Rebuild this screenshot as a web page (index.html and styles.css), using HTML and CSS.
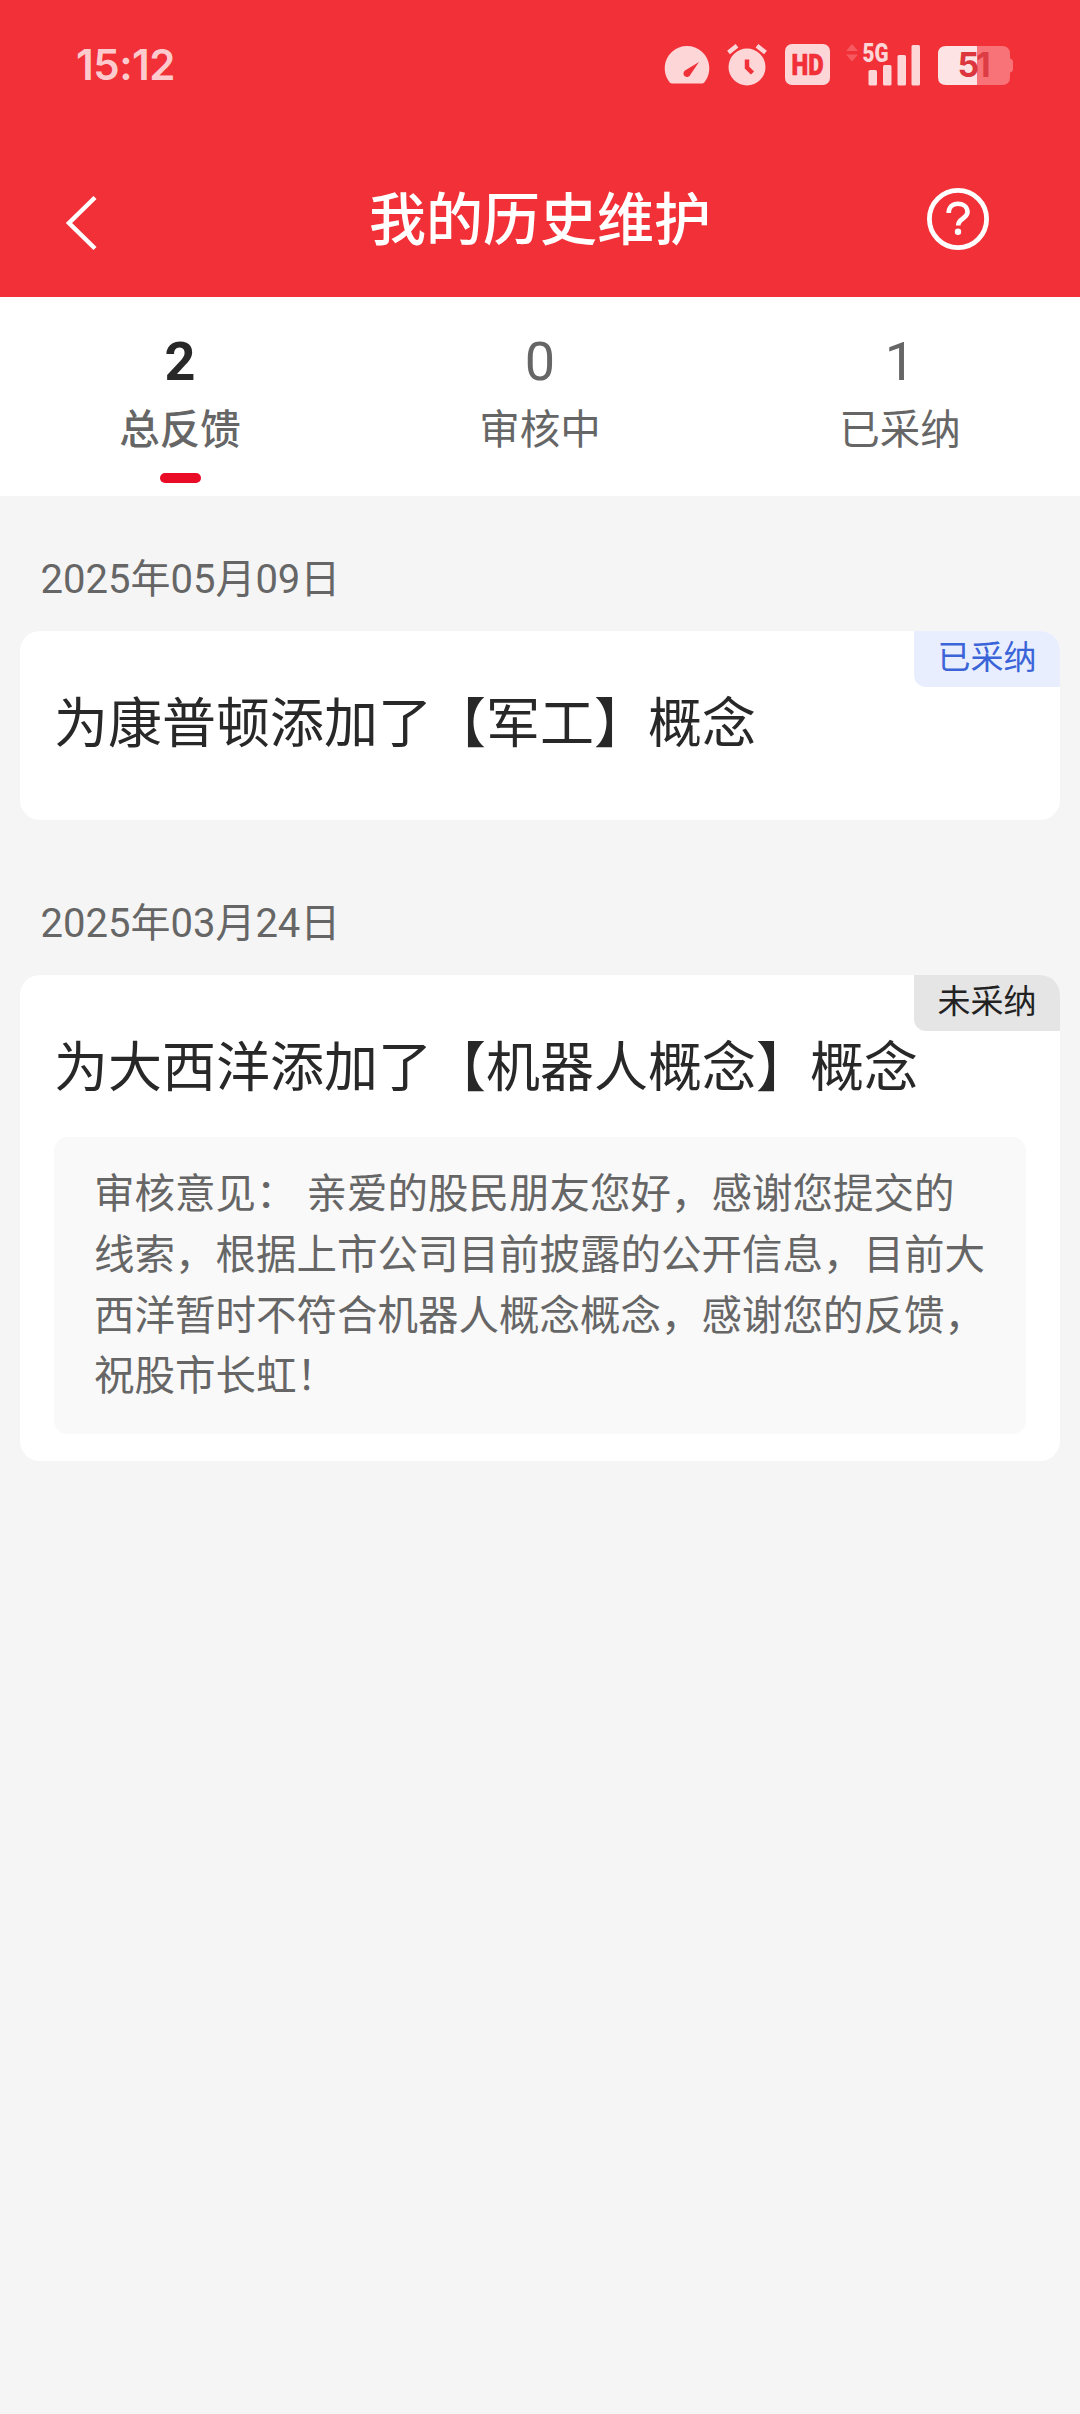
FILE: index.html
```html
<!DOCTYPE html>
<html lang="zh-CN">
<head>
    <meta charset="UTF-8">
    <meta name="viewport" content="width=device-width, initial-scale=1.0">
    <title>我的历史维护</title>
    <link rel="stylesheet" href="styles.css">
</head>
<body>
    <div class="top">
        <div class="statusBar">
            <p class="time">15:12</p>
            <div class="statusIcons">
                <svg class="gauge" width="46" height="42" viewBox="0 0 46 42">
                    <path fill="#fdd6d8" d="M8 39.500Q6 39.500 5 37.500A22.300 22.300 0 1 1 41 37.500Q40 39.500 38 39.500Z"/>
                    <path fill="#f13038" d="M35 18L26.500 30.500A3.600 3.600 0 1 1 21 26.500Z"/>
                </svg>
                <svg class="alarm" width="42" height="42" viewBox="0 0 42 42">
                    <circle cx="21" cy="23" r="18.500" fill="#fdd6d8"/>
                    <path d="M2.500 8.500L11 1.800M39.500 8.500L31 1.800" stroke="#fdd6d8" stroke-width="4.500" fill="none"/>
                    <path d="M21 15.500V23.500L26.500 29" stroke="#f13038" stroke-width="4.500" fill="none"/>
                </svg>
                <div class="hd"><span>HD</span></div>
                <svg class="signal" width="76" height="42" viewBox="0 0 76 42">
                    <path fill="#f65a60" d="M0 7L6 0L12 7ZM0 10.500H12L6 17.500Z"/>
                    <text x="16.500" y="18" textLength="26" lengthAdjust="spacingAndGlyphs" class="net">5G</text>
                    <g fill="#fdd6d8">
                        <rect x="22.500" y="26" width="8.500" height="15.500" rx="1.500"/>
                        <rect x="37" y="21" width="8.500" height="20.500" rx="1.500"/>
                        <rect x="51.500" y="11" width="8.500" height="30.500" rx="1.500"/>
                        <rect x="65.500" y="1" width="8.500" height="40.500" rx="1.500"/>
                    </g>
                </svg>
                <svg class="battery" width="76" height="42" viewBox="0 0 76 42">
                    <path fill="#f87378" d="M39 2H64Q72 2 72 10V14.500Q75 15.500 75 18V25Q75 27.500 72 28.500V33Q72 41 64 41H39Z"/>
                    <path fill="#fee3e4" d="M39 2H8Q0 2 0 10V33Q0 41 8 41H39Z"/>
                    <text x="19.500" y="33.300" class="level">5<tspan x="38" fill="#dd3c44">1</tspan></text>
                </svg>
            </div>
        </div>
        <div class="header">
            <svg class="back" width="34" height="56" viewBox="0 0 34 56">
                <path d="M31 2.500L5 28L31 53.500" stroke="#fff" stroke-width="4.500" fill="none"/>
            </svg>
            <h1>我的历史维护</h1>
            <svg class="help" width="64" height="64" viewBox="0 0 64 64">
                <circle cx="32" cy="32" r="28.600" stroke="#fff" stroke-width="4.800" fill="none"/>
                <path d="M22.700 26C22.700 20 26.500 16.700 32 16.700C37.800 16.700 41.500 20.300 41.500 25C41.500 32 32.200 31 32.200 38.500" stroke="#fff" stroke-width="4.600" fill="none"/>
                <circle cx="32" cy="44.700" r="3.200" fill="#fff"/>
            </svg>
        </div>
    </div>

    <div class="tabs">
        <div class="tab active">
            <p class="num">2</p>
            <p class="label">总反馈</p>
        </div>
        <div class="tab">
            <p class="num">0</p>
            <p class="label">审核中</p>
        </div>
        <div class="tab">
            <p class="num">1</p>
            <p class="label">已采纳</p>
        </div>
    </div>

    <div class="list">
        <p class="date">2025年05月09日</p>
        <div class="card">
            <span class="badge badgeOk">已采纳</span>
            <h2>为康普顿添加了【军工】概念</h2>
        </div>

        <p class="date">2025年03月24日</p>
        <div class="card">
            <span class="badge badgeNo">未采纳</span>
            <h2>为大西洋添加了【机器人概念】概念</h2>
            <p class="opinion">审核意见： 亲爱的股民朋友您好，感谢您提交的<br>线索，根据上市公司目前披露的公开信息，目前大<br>西洋暂时不符合机器人概念概念，感谢您的反馈，<br>祝股市长虹！</p>
        </div>
    </div>
</body>
</html>
```
FILE: styles.css
```css
*{
    padding: 0px;
    margin: 0px;
    box-sizing: border-box;
}
body{
    width: 100%;
    min-height: 2414px;
    background-color: #f5f5f5;
    font-family: Roboto, "Noto Sans CJK SC", sans-serif;
    color: #666;
}
svg{
    display: block;
    overflow: visible;
}
.top{
    height: 297px;
    background-color: #f13038;
    color: white;
}
/* status bar */
.statusBar{
    height: 129px;
    padding: 0px 66px 0px 76px;
    display: flex;
    justify-content: space-between;
    align-items: center;
}
.time{
    font-family: Inter, sans-serif;
    font-size: 42px;
    font-weight: 600;
    letter-spacing: -0.5px;
    color: #fdcbce;
}
.statusIcons{
    display: flex;
    align-items: center;
}
.alarm{
    margin-left: 16px;
}
.hd{
    width: 45px;
    height: 41px;
    margin: 0px 16px 0px 17px;
    border-radius: 7px;
    background-color: #fdd6d8;
    color: #f13038;
    font-size: 29px;
    font-weight: 900;
    line-height: 42px;
    display: flex;
    justify-content: center;
    -webkit-text-stroke: 0.6px #f13038;
}
.hd span{
    transform: scaleX(.82);
}
.net{
    font-size: 25px;
    font-weight: 900;
    fill: #fdd6d8;
}
.battery{
    margin-left: 16px;
}
.level{
    font-family: Inter, sans-serif;
    font-size: 34px;
    font-weight: 700;
    fill: #dc363e;
}
/* title bar */
.header{
    height: 168px;
    padding: 12px 90px 0px 64px;
    display: grid;
    grid-template-columns: 64px 1fr 64px;
    align-items: center;
}
.header h1{
    /* side paddings differ by 26px, keeps the title on the screen centre */
    padding: 3px 0px 0px 26px;
    font-size: 57px;
    font-weight: 500;
    line-height: 80px;
    text-align: center;
}
.back{
    margin-top: 8px;
}
/* tabs */
.tabs{
    height: 199px;
    background-color: white;
    display: flex;
}
.tab{
    flex: 1;
    display: flex;
    flex-direction: column;
    align-items: center;
    padding-top: 33px;
}
.num{
    font-size: 54px;
    line-height: 64px;
}
.label{
    font-size: 40.5px;
    line-height: 60px;
    margin-top: 6px;
}
.active .num{
    font-weight: 700;
    color: #282828;
}
.active .label{
    font-weight: 500;
}
.active::after{
    content: "";
    width: 41px;
    height: 10px;
    margin: 13px 0px 0px 1px;
    border-radius: 5px;
    background-color: #ea0c27;
}
/* feedback list */
.list{
    padding: 0px 20px;
}
.date{
    height: 135px;
    padding: 54px 20px 0px 20.5px;
    font-size: 40px;
    line-height: 60px;
}
.card{
    position: relative;
    min-height: 189px;
    padding: 56px 34px 27px;
    margin-bottom: 20px;
    border-radius: 20px;
    background-color: white;
    overflow: hidden;
}
.card h2{
    font-size: 54px;
    font-weight: 400;
    line-height: 76px;
    color: #282828;
    white-space: nowrap;
}
.badge{
    position: absolute;
    top: 0px;
    right: 0px;
    width: 146px;
    height: 56px;
    border-radius: 0px 0px 0px 12px;
    font-size: 33px;
    line-height: 54px;
    text-align: center;
}
.badgeOk{
    background-color: #e8eefe;
    color: #3b64d8;
}
.badgeNo{
    background-color: #e5e5e5;
    color: #222;
}
.opinion{
    margin-top: 30px;
    padding: 27px 40px;
    border-radius: 14px;
    background-color: #f9f9f9;
    font-size: 40.5px;
    line-height: 60.75px;
    white-space: nowrap;
}
```
